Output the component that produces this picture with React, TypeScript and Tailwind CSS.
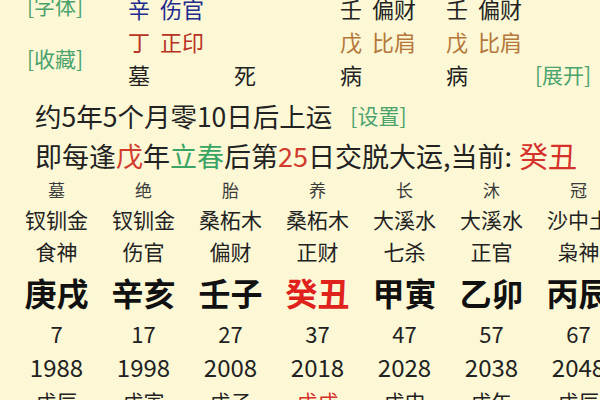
import React from 'react';

const cols = [
  { cs: '墓', ny: '钗钏金', ss: '食神', gz: '庚戌', age: 7, yr: 1988, ln: '戊辰' },
  { cs: '绝', ny: '钗钏金', ss: '伤官', gz: '辛亥', age: 17, yr: 1998, ln: '戊寅' },
  { cs: '胎', ny: '桑柘木', ss: '偏财', gz: '壬子', age: 27, yr: 2008, ln: '戊子' },
  { cs: '养', ny: '桑柘木', ss: '正财', gz: '癸丑', age: 37, yr: 2018, ln: '戊戌', cur: true },
  { cs: '长', ny: '大溪水', ss: '七杀', gz: '甲寅', age: 47, yr: 2028, ln: '戊申' },
  { cs: '沐', ny: '大溪水', ss: '正官', gz: '乙卯', age: 57, yr: 2038, ln: '戊午' },
  { cs: '冠', ny: '沙中土', ss: '枭神', gz: '丙辰', age: 67, yr: 2048, ln: '戊辰' },
];

// top pillars: [row1, row2, row3]
const pillars = [
  { r1: ['辛', '伤官'], r2: ['丁', '正印'], r3: '墓' },
  { r1: null, r2: null, r3: '死' },
  { r1: ['壬', '偏财'], r2: ['戊', '比肩'], r3: '病' },
  { r1: ['壬', '偏财'], r2: ['戊', '比肩'], r3: '病' },
];

function Pair({ v, color }: { v: string[] | null; color: string }) {
  if (!v) return null;
  return (
    <span className={`whitespace-nowrap ${color}`}>
      {v[0]}
      <span className="ml-[10px]">{v[1]}</span>
    </span>
  );
}

export default function App() {
  return (
    <div className="w-[600px] h-[400px] overflow-hidden bg-[#fcf8d6] font-['Noto_Sans_CJK_SC',sans-serif] text-[#222]">
      {/* pillars block */}
      <div className="flex -mt-[8px]">
        <div className="w-[128px] shrink-0 pl-[27px] flex flex-col text-[21px] text-[#4aa36c]">
          <div className="h-[33px] flex items-center pb-[6px]">[字体]</div>
          <div className="h-[66px] flex items-center pt-[2px]">[收藏]</div>
        </div>
        <div className="flex flex-col text-[22px]">
          <div className="h-[33px] flex items-center">
            {pillars.map((p, i) => (
              <div key={i} className={i === 3 ? 'w-[89px]' : 'w-[106px]'}>
                <Pair v={p.r1} color={i === 0 ? 'text-[#1e2b8f]' : 'text-[#222]'} />
              </div>
            ))}
          </div>
          <div className="h-[33px] flex items-center">
            {pillars.map((p, i) => (
              <div key={i} className={i === 3 ? 'w-[89px]' : 'w-[106px]'}>
                <Pair v={p.r2} color={i === 0 ? 'text-[#b8321f]' : 'text-[#b5773a]'} />
              </div>
            ))}
          </div>
          <div className="h-[33px] flex items-center">
            {pillars.map((p, i) => (
              <div key={i} className={i === 3 ? 'w-[89px]' : 'w-[106px]'}>
                {p.r3}
              </div>
            ))}
            <span className="text-[21px] text-[#4aa36c] whitespace-nowrap">[展开]</span>
          </div>
        </div>
      </div>

      {/* qiyun text */}
      <div className="mt-[4px] pl-[35px] h-[42px] flex items-center text-[26.5px] whitespace-nowrap">
        约5年5个月零10日后上运
        <span className="ml-[18px] text-[21px] text-[#4aa36c]">[设置]</span>
      </div>
      <div className="pl-[35px] h-[38px] flex items-center text-[27px] whitespace-nowrap">
        即每逢<span className="text-[#d23a2c]">戊</span>年<span className="text-[#3aa464]">立春</span>后第
        <span className="text-[#d23a2c]">25</span>日交脱大运,当前:
        <span className="ml-[7px] text-[29px] text-[#d6302a]">癸丑</span>
      </div>

      {/* dayun grid */}
      <div className="flex pl-[13px]">
        {cols.map((c) => (
          <div key={c.yr} className="w-[87px] shrink-0 flex flex-col items-center whitespace-nowrap">
            <div className="h-[29px] flex items-center text-[17px] text-[#3a3a3a]">{c.cs}</div>
            <div className="h-[32px] flex items-center text-[21px]">{c.ny}</div>
            <div className="h-[32px] flex items-center text-[21px]">{c.ss}</div>
            <div className={`h-[48px] flex items-center text-[32px] font-bold ${c.cur ? 'text-[#e0221c]' : 'text-[#111]'}`}>
              {c.gz}
            </div>
            <div className="h-[34px] flex items-center text-[22px]">{c.age}</div>
            <div className="h-[34px] flex items-center text-[24px]">{c.yr}</div>
            <div className={`h-[36px] flex items-center text-[21px] ${c.cur ? 'text-[#d6302a]' : ''}`}>{c.ln}</div>
          </div>
        ))}
      </div>
    </div>
  );
}
